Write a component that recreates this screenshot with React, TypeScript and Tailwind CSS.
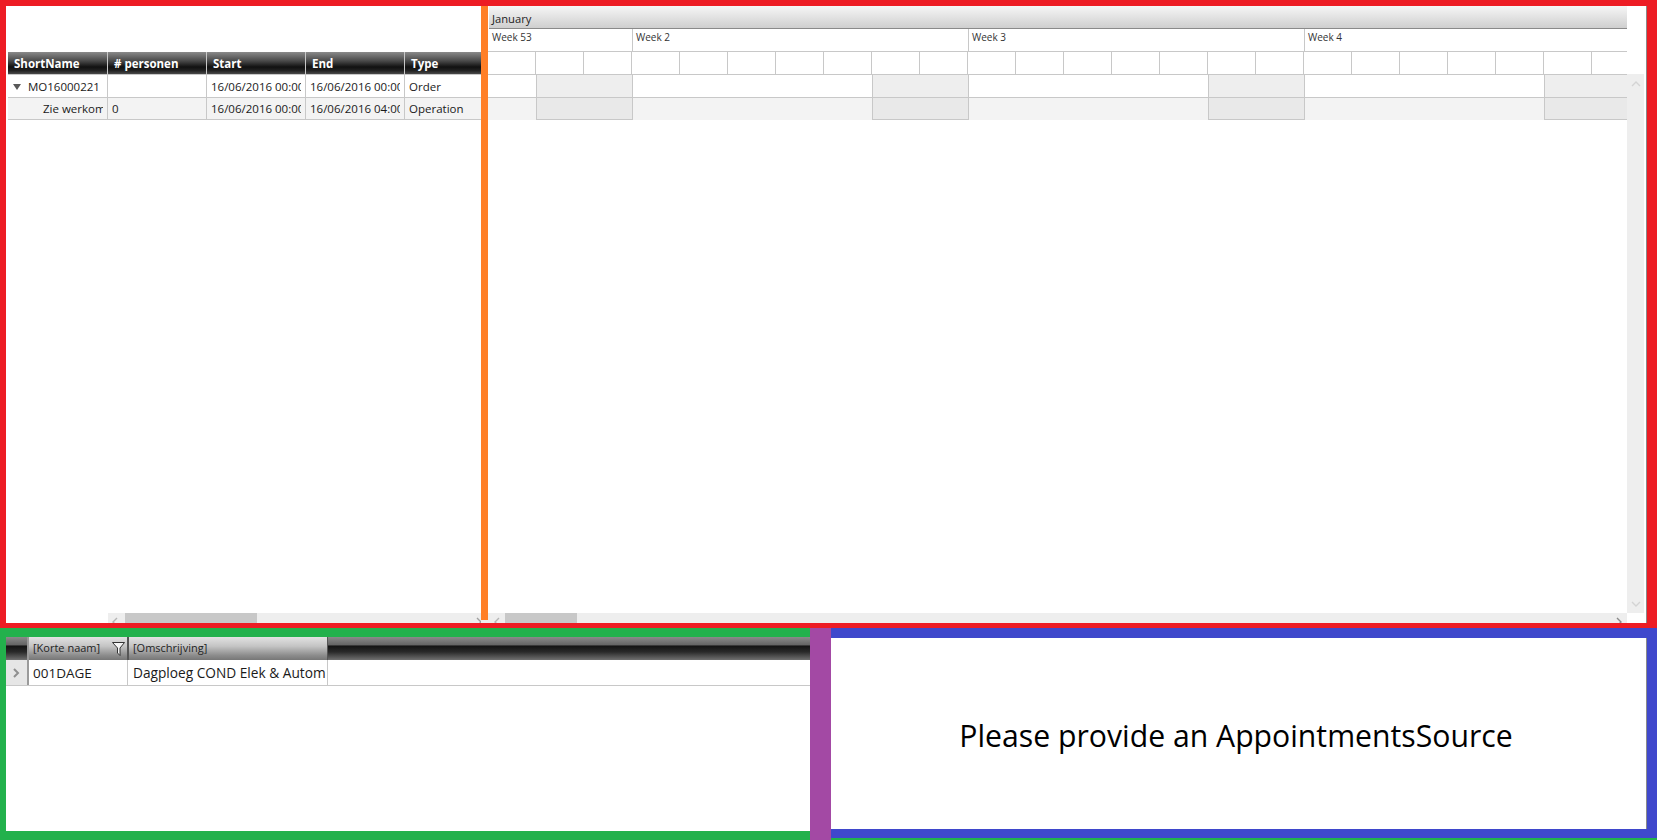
const font = "font-['Open_Sans','Noto_Sans',sans-serif]";

const dayCells = Array.from({ length: 24 }, (_, i) => i);
const weeks = [
  { label: 'Week 53', width: 'w-[144px]' },
  { label: 'Week 2', width: 'w-[336px]' },
  { label: 'Week 3', width: 'w-[336px]' },
  { label: 'Week 4', width: 'w-[336px]' },
];

const columns = [
  { title: 'ShortName', width: 'w-[100px]' },
  { title: '# personen', width: 'w-[99px]' },
  { title: 'Start', width: 'w-[99px]' },
  { title: 'End', width: 'w-[99px]' },
  { title: 'Type', width: 'w-[76px]' },
];

const treeHeader = 'bg-[linear-gradient(#8a8a8a_0%,#4a4a4a_40%,#111111_68%,#222222_85%,#4a4a4a_100%)]';
const gridHeader = 'bg-[linear-gradient(#8a8a8a_0%,#666666_33%,#141414_40%,#2a2a2a_65%,#707070_100%)]';
const lightHeader = 'bg-[linear-gradient(#e2e2e2_0%,#c4c4c4_40%,#8c8c8c_80%,#777777_100%)]';

function Chevron({ dir, className, weight = 1.4 }: { dir: 'left' | 'right' | 'up' | 'down'; className: string; weight?: number }) {
  const points = {
    left: 'M6 1 L2 5 L6 9',
    right: 'M2 1 L6 5 L2 9',
    up: 'M1 6 L5 2 L9 6',
    down: 'M1 2 L5 6 L9 2',
  }[dir];
  return (
    <svg viewBox="0 0 10 10" className={className} fill="none" stroke="currentColor" strokeWidth={weight}>
      <path d={points} />
    </svg>
  );
}

function TreeRow({ cells, shaded }: { cells: React.ReactNode[]; shaded?: boolean }) {
  return (
    <div className={`flex border-b border-[#c8c8c8] ${shaded ? 'h-[22px] bg-[#f3f3f3]' : 'h-[23px] bg-white'}`}>
      {cells.map((cell, i) => (
        <div
          key={i}
          className={`${columns[i].width} shrink-0 flex items-center pr-[4px] pt-[1px] text-[11.5px] text-[#1a1a1a] ${i < 4 ? 'border-r border-[#c8c8c8]' : ''}`}
        >
          <div className="flex-1 min-w-0 overflow-hidden whitespace-nowrap">{cell}</div>
        </div>
      ))}
    </div>
  );
}

function GanttRow({ shaded }: { shaded?: boolean }) {
  const bg = shaded ? 'h-[22px] bg-[#f3f3f3]' : 'h-[23px] bg-white border-b border-[#c8c8c8]';
  const weekend = `${shaded ? 'bg-[#e9e9e9] border-b' : 'bg-[#eeeeee]'} border-x border-[#c8c8c8]`;
  return (
    <div className={`flex shrink-0 ${bg}`}>
      <div className="w-[48px] shrink-0" />
      <div className={`w-[97px] shrink-0 ${weekend}`} />
      <div className="w-[239px] shrink-0" />
      <div className={`w-[97px] shrink-0 ${weekend}`} />
      <div className="w-[239px] shrink-0" />
      <div className={`w-[97px] shrink-0 ${weekend}`} />
      <div className="w-[239px] shrink-0" />
      <div className={`w-[97px] shrink-0 ${weekend}`} />
    </div>
  );
}

export default function App() {
  return (
    <div className={`w-[1657px] h-[840px] overflow-hidden bg-white flex flex-col ${font}`}>
      {/* top: tree list + gantt */}
      <div className="h-[628px] shrink-0 flex border-t-[6px] border-l-[6px] border-r-[10px] border-b-[5px] border-[#ed1c24]">
        {/* tree list */}
        <div className="w-[475px] shrink-0 flex flex-col pl-[2px] pt-[46px]">
          <div className={`flex h-[23px] border-b border-[#c8c8c8] ${treeHeader}`}>
            {columns.map((col, i) => (
              <div
                key={col.title}
                className={`${col.width} shrink-0 flex items-center pl-[6px] pt-[1px] text-[11.5px] font-bold text-white ${i < 4 ? 'border-r border-[#c8c8c8]' : ''}`}
              >
                {col.title}
              </div>
            ))}
          </div>
          <TreeRow
            cells={[
              <div className="flex items-center pl-[5px]" key="a">
                <div className="w-0 h-0 mr-[7px] border-x-[4px] border-x-transparent border-t-[6px] border-t-[#595959]" />
                MO16000221
              </div>,
              '',
              <span className="pl-[4px]" key="c">16/06/2016 00:00</span>,
              <span className="pl-[4px]" key="d">16/06/2016 00:00</span>,
              <span className="pl-[4px]" key="e">Order</span>,
            ]}
          />
          <TreeRow
            shaded
            cells={[
              <span className="pl-[35px]" key="a">Zie werkom</span>,
              <span className="pl-[4px]" key="b">0</span>,
              <span className="pl-[4px]" key="c">16/06/2016 00:00</span>,
              <span className="pl-[4px]" key="d">16/06/2016 04:00</span>,
              <span className="pl-[4px]" key="e">Operation</span>,
            ]}
          />
          <div className="mt-auto ml-[100px] h-[10px] flex overflow-hidden bg-[#eeeeee]">
            <Chevron dir="left" className="w-[10px] h-[10px] mt-[4px] ml-[3px] mr-[4px] text-[#b5b5b5] shrink-0" />
            <div className="w-[132px] h-full bg-[#c8c8c8]" />
            <Chevron dir="right" className="w-[10px] h-[10px] mt-[4px] ml-auto mr-[-4px] text-[#a0a0a0] shrink-0" />
          </div>
        </div>

        {/* splitter */}
        <div className="w-[7px] shrink-0 flex flex-col bg-[#eeeeee]">
          <div className="h-[614px] bg-[#ff7f27]" />
        </div>

        {/* gantt */}
        <div className="flex-1 min-w-0 flex border-r-[1px] border-[#8a8a8a]">
          <div className="w-[1139px] shrink-0 flex flex-col overflow-hidden">
            <div className="h-[23px] ml-[1px] shrink-0 flex items-center pl-[3px] pt-[4px] text-[11.2px] text-[#222222] border-b border-[#8a8a8a] bg-[linear-gradient(#f6f6f6,#cfcfcf)]">
              January
            </div>
            <div className="flex h-[23px] shrink-0 border-b border-[#c8c8c8] pl-[1px]">
              {weeks.map((week) => (
                <div key={week.label} className={`${week.width} shrink-0 border-r border-[#c8c8c8] pl-[3px] text-[10px] text-[#333333] pt-[1px] leading-[14px]`}>
                  {week.label}
                </div>
              ))}
            </div>
            <div className="flex h-[23px] shrink-0 border-b border-[#c8c8c8]">
              {dayCells.map((d) => (
                <div key={d} className="w-[48px] shrink-0 border-r border-[#c8c8c8]" />
              ))}
            </div>
            <GanttRow />
            <GanttRow shaded />
            <div className="mt-auto h-[10px] flex shrink-0 overflow-hidden bg-[#eeeeee]">
              <Chevron dir="left" className="w-[10px] h-[10px] mt-[4px] ml-[5px] mr-[2px] text-[#b5b5b5] shrink-0" />
              <div className="w-[72px] h-full bg-[#c8c8c8]" />
              <Chevron dir="right" className="w-[10px] h-[10px] mt-[4px] ml-auto mr-[2px] text-[#8a8a8a] shrink-0" />
            </div>
          </div>
          <div className="flex-1 flex flex-col pt-[68px] pb-[10px]">
            <div className="w-[17px] flex-1 bg-[#eeeeee] flex flex-col items-center justify-between py-[6px]">
              <Chevron dir="up" className="w-[10px] h-[10px] text-[#d4d4d4]" />
              <Chevron dir="down" className="w-[10px] h-[10px] mb-[-3px] text-[#d4d4d4]" />
            </div>
          </div>
        </div>
      </div>

      {/* bottom: resources + scheduler */}
      <div className="flex-1 flex">
        <div className="w-[810px] shrink-0 flex flex-col border-t-[9px] border-l-[6px] border-b-[9px] border-[#22b14c]">
          <div className={`flex h-[23px] shrink-0 ${gridHeader}`}>
            <div className="w-[23px] shrink-0 border-r-[2px] border-[#9a9a9a]" />
            <div className={`w-[99px] shrink-0 flex items-center justify-between pl-[4px] pr-[2px] text-[11px] text-[#222222] border-r border-[#555555] ${lightHeader}`}>
              [Korte naam]
              <svg viewBox="0 0 13 14" className="w-[13px] h-[14px]" fill="#f4f4f4" stroke="#333333" strokeWidth="1">
                <path d="M0.5 0.5 H12.5 L8 6 V13.5 L5.5 11 V6 Z" />
              </svg>
            </div>
            <div className={`w-[200px] shrink-0 flex items-center pl-[4px] text-[11px] text-[#222222] border-x border-[#555555] ${lightHeader}`}>
              [Omschrijving]
            </div>
          </div>
          <div className="flex h-[26px] shrink-0 border-b border-[#c8c8c8]">
            <div className="w-[23px] shrink-0 bg-[#e6e6e6] border-r-[2px] border-[#9a9a9a] flex items-center justify-center">
              <Chevron dir="right" weight={2} className="w-[10px] h-[10px] text-[#8f8f8f]" />
            </div>
            <div className="w-[99px] shrink-0 flex items-center pl-[4px] pt-[2px] text-[13.5px] text-[#1a1a1a] border-r border-[#c8c8c8]">
              001DAGE
            </div>
            <div className="w-[200px] shrink-0 flex items-center pl-[5px] pt-[2px] overflow-hidden whitespace-nowrap text-[13.7px] text-[#1a1a1a] border-r border-[#c8c8c8]">
              Dagploeg COND Elek &amp; Autom
            </div>
          </div>
        </div>
        <div className="w-[21px] shrink-0 bg-[#a349a4]" />
        <div className="flex-1 min-w-0 flex flex-col border-b-[2px] border-[#22b14c]">
          <div className="flex-1 flex border-t-[10px] border-r-[10px] border-b-[9px] border-[#3f48cc]">
            <div className="flex-1 flex items-center justify-center border-r-[1px] border-[#8a8a8a] text-[30.2px] text-black pt-[5px] pr-[5px]">
              Please provide an AppointmentsSource
            </div>
          </div>
        </div>
      </div>
    </div>
  );
}
